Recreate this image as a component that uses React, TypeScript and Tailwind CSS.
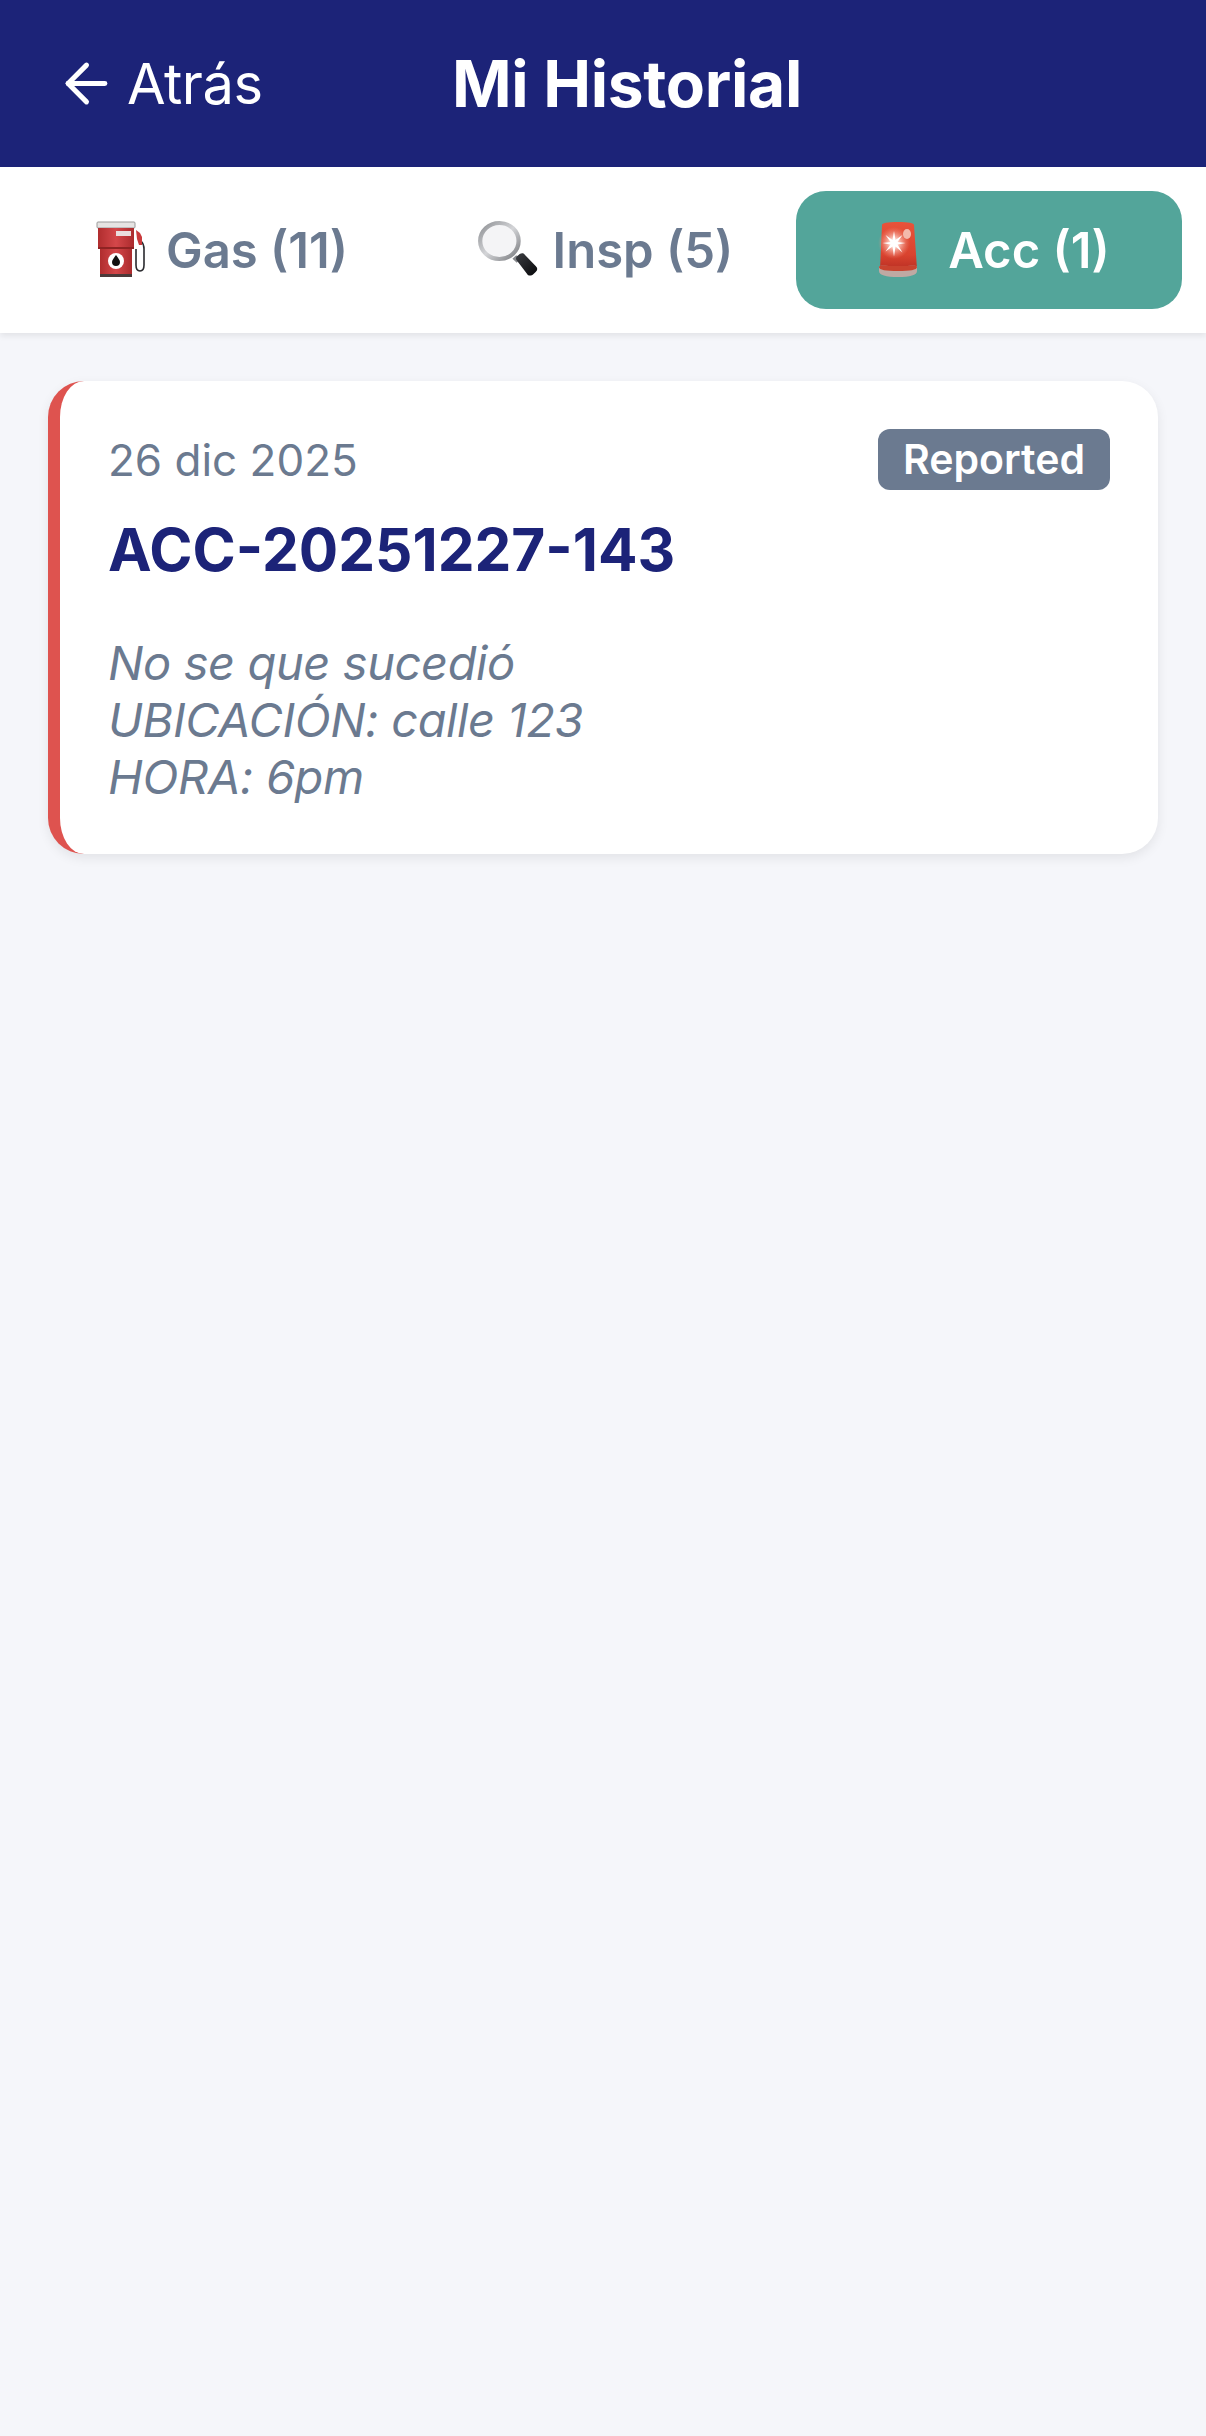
import { ArrowLeft } from "lucide-react";

function GasIcon() {
  return (
    <svg width="60" height="60" viewBox="0 0 60 60" className="shrink-0">
      <defs>
        <linearGradient id="gasBody" x1="0" x2="1" y1="0" y2="0">
          <stop offset="0" stopColor="#b02d2e" />
          <stop offset="0.5" stopColor="#d4474a" />
          <stop offset="1" stopColor="#ab2b2d" />
        </linearGradient>
      </defs>
      <path d="M47 20c3 3 3 5 3 8v16c0 4-2 6-4 6s-4-2-4-6V28" fill="none" stroke="#2a2a2e" strokeWidth="1.6" />
      <path d="M42 9l4 3 2 4v8h-3l-2-6z" fill="#c93a3c" />
      <rect x="3" y="1" width="38" height="6" rx="1" fill="#e6e4e3" stroke="#9a9a9a" strokeWidth="1" />
      <rect x="4" y="7" width="36" height="20" fill="url(#gasBody)" />
      <rect x="22" y="10" width="15" height="5" fill="#eadede" />
      <path d="M6 27h32v26H6z" fill="url(#gasBody)" />
      <rect x="4" y="26" width="36" height="2" fill="#8f2323" />
      <rect x="6" y="53" width="32" height="3" fill="#4a3a3a" />
      <circle cx="22" cy="40" r="8" fill="#fff" />
      <path d="M22 34c2 3 4 5 4 7a4 4 0 0 1-8 0c0-2 2-4 4-7z" fill="#111" />
    </svg>
  );
}

function SearchIcon() {
  return (
    <svg width="64" height="60" viewBox="0 0 60 60" preserveAspectRatio="none" className="-ml-[4px] shrink-0">
      <defs>
        <linearGradient id="lensRim" x1="0" x2="1" y1="0" y2="1">
          <stop offset="0" stopColor="#8e9094" />
          <stop offset="0.5" stopColor="#d4d5d8" />
          <stop offset="1" stopColor="#77797d" />
        </linearGradient>
        <linearGradient id="lensHandle" x1="0" x2="1" y1="0" y2="1">
          <stop offset="0" stopColor="#3b3d42" />
          <stop offset="1" stopColor="#08080a" />
        </linearGradient>
      </defs>
      <path d="M35 36l4 4" stroke="#85878b" strokeWidth="5" />
      <path d="M37 39c-1-2 0-4 2-5l1-1c2-1 4-1 5 1l10 11c2 2 2 4 0 6l-2 2c-2 2-5 2-6 0z" fill="url(#lensHandle)" />
      <circle cx="21" cy="20" r="18" fill="#f4f4f6" stroke="url(#lensRim)" strokeWidth="4" />
    </svg>
  );
}

function SirenIcon() {
  return (
    <svg width="60" height="60" viewBox="0 0 60 60" className="shrink-0">
      <defs>
        <linearGradient id="sirenBody" x1="0" x2="0" y1="0" y2="1">
          <stop offset="0" stopColor="#e8533a" />
          <stop offset="0.7" stopColor="#d9432f" />
          <stop offset="1" stopColor="#bb3024" />
        </linearGradient>
        <radialGradient id="sirenGlow" cx="0.5" cy="0.5" r="0.5">
          <stop offset="0" stopColor="#ffffff" />
          <stop offset="0.3" stopColor="#ffd6cc" stopOpacity="0.9" />
          <stop offset="1" stopColor="#f08a78" stopOpacity="0" />
        </radialGradient>
      </defs>
      <path d="M6 4c0-2 5-3 16-3s16 1 16 3l3 44H4z" fill="url(#sirenBody)" />
      <path d="M3 46c0-2 4-1 19-1s19-1 19 1v4c0 4-7 6-19 6S3 54 3 50z" fill="#bfa9a3" />
      <path d="M3 46c0-2 4-1 19-1s19-1 19 1c0 3-7 4-19 4S3 49 3 46z" fill="#c9432f" />
      <circle cx="18" cy="22" r="16" fill="url(#sirenGlow)" />
      <path d="M18 10l1.500 9 7-5-5 7 8 1-8 1.500 5 8-7-6-1.500 10-1.500-10-7 5 5-7-8-1.500 8-1-5-7 7 5z" fill="#fff" />
      <ellipse cx="31" cy="13" rx="4" ry="5" fill="#f3b9ac" />
    </svg>
  );
}

const tabs = [
  { label: "Gas (11)", icon: <GasIcon />, active: false },
  { label: "Insp (5)", icon: <SearchIcon />, active: false },
  { label: "Acc (1)", icon: <SirenIcon />, active: true },
];

export default function App() {
  return (
    <div className="flex h-[2436px] flex-col bg-[#f5f6fa] font-['Inter',sans-serif]">
      <header className="flex h-[167px] items-center bg-[#1c2378] pl-[55px] text-white">
        <div className="flex w-[397px] items-center gap-[9px]">
          <ArrowLeft size={63} strokeWidth={1.9} />
          <span className="text-[56px] leading-none tracking-[-0.5px]">Atrás</span>
        </div>
        <h1 className="text-[64px] leading-none font-bold tracking-[-0.3px]">Mi Historial</h1>
      </header>

      <nav className="flex bg-white p-[24px] shadow-[0_3px_6px_rgba(0,0,0,0.08)]">
        {tabs.map((tab) => (
          <div
            key={tab.label}
            className={`flex h-[118px] flex-1 items-center justify-center gap-[12px] rounded-[30px] pt-[2px] pl-[8px] text-[49px] font-semibold ${
              tab.active ? "bg-[#53a59a] text-white" : "text-[#6b7a90]"
            }`}
          >
            {tab.icon}
            <span>{tab.label}</span>
          </div>
        ))}
      </nav>

      <main className="p-[48px]">
        <div className="rounded-[36px] border-l-[12px] border-[#de534f] bg-white px-[48px] pt-[48px] pb-[49px] shadow-[0_4px_12px_rgba(0,0,0,0.08)]">
          <div className="flex h-[61px] items-center justify-between">
            <span className="text-[44px] leading-none text-[#6b7a90]">26 dic 2025</span>
            <span className="flex h-[61px] items-center rounded-[12px] bg-[#6b7a90] px-[25px] text-[41px] leading-none font-semibold text-white">
              Reported
            </span>
          </div>
          <h2 className="mt-[25px] text-[58.500px] leading-[70px] font-bold text-[#1c2378]">ACC-20251227-143</h2>
          <p className="mt-[49px] text-[47px] leading-[57px] tracking-[-0.4px] text-[#6b7a90] italic">
            No se que sucedió
            <br />
            UBICACIÓN: calle 123
            <br />
            HORA: 6pm
          </p>
        </div>
      </main>
    </div>
  );
}
